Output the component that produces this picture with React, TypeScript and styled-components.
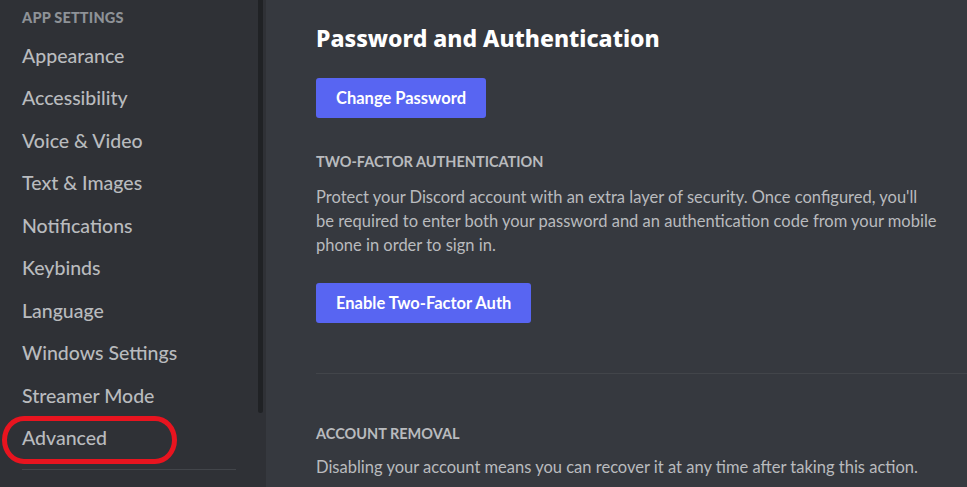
import React from "react";
import styled, { createGlobalStyle } from "styled-components";

const Global = createGlobalStyle`
  html, body { margin: 0; padding: 0; background: #36393f; }
  body { font-family: Lato, "Noto Sans", sans-serif; overflow: hidden; }
  * { box-sizing: border-box; }
`;

const Shell = styled.div`
  display: flex;
  width: 967px;
  height: 487px;
  overflow: hidden;
`;

const Sidebar = styled.aside`
  display: flex;
  width: 266px;
  flex-shrink: 0;
  background: #2f3136;
`;

const Nav = styled.nav`
  position: relative;
  flex: 1;
  padding: 8px 0 0 22px;
  display: flex;
  flex-direction: column;
`;

const NavHeader = styled.div`
  font-size: 14.5px;
  font-weight: 900;
  letter-spacing: 0.2px;
  color: #8e9297;
  line-height: 20px;
  height: 26px;
  text-transform: uppercase;
`;

const NavItem = styled.div`
  height: 42.5px;
  display: flex;
  align-items: center;
  font-size: 19.5px;
  color: #b9bbbe;
  font-weight: 500;
`;

const NavDivider = styled.div`
  margin-top: 10px;
  margin-right: 22px;
  height: 1px;
  background: #42454a;
`;

const Highlight = styled.div`
  position: absolute;
  left: 2px;
  top: 416px;
  width: 175px;
  height: 48px;
  border: 5px solid #e8141f;
  border-radius: 22px / 24px;
  pointer-events: none;
`;

const ScrollTrack = styled.div`
  width: 8px;
  display: flex;
  padding-right: 3px;
`;

const ScrollThumb = styled.div`
  width: 5px;
  height: 413px;
  background: #202225;
  border-radius: 0 0 3px 3px;
`;

const Main = styled.main`
  flex: 1;
  background: #36393f;
  padding: 22px 0 0 50px;
  display: flex;
  flex-direction: column;
`;

const Title = styled.h1`
  margin: 0 0 24px;
  font-size: 23px;
  line-height: 32px;
  font-weight: 800;
  color: #ffffff;
  font-family: "Noto Sans", Lato, sans-serif;
`;

const Button = styled.button<{ $top?: number }>`
  align-self: flex-start;
  margin-top: ${(p) => p.$top ?? 0}px;
  height: 40px;
  padding: 0 20px;
  border: 0;
  border-radius: 3px;
  background: #5865f2;
  color: #ffffff;
  font-family: Lato, sans-serif;
  font-size: 16.5px;
  font-weight: 700;
`;

const SectionLabel = styled.h2<{ $top: number }>`
  margin: ${(p) => p.$top}px 0 0;
  font-size: 14.5px;
  line-height: 20px;
  font-weight: 700;
  color: #b9bbbe;
  text-transform: uppercase;
`;

const Para = styled.p<{ $top?: number }>`
  margin: ${(p) => p.$top ?? 13}px 0 0;
  width: 621px;
  font-size: 16.5px;
  line-height: 24px;
  color: #b9bbbe;
`;

const Divider = styled.div`
  margin: 50px 0 0;
  height: 1px;
  background: #42454a;
`;

const items = [
  "Appearance",
  "Accessibility",
  "Voice & Video",
  "Text & Images",
  "Notifications",
  "Keybinds",
  "Language",
  "Windows Settings",
  "Streamer Mode",
  "Advanced",
];

export default function App() {
  return (
    <>
      <Global />
      <Shell>
        <Sidebar>
          <Nav>
            <NavHeader>App Settings</NavHeader>
            {items.map((it) => (
              <NavItem key={it}>{it}</NavItem>
            ))}
            <NavDivider />
            <Highlight />
          </Nav>
          <ScrollTrack>
            <ScrollThumb />
          </ScrollTrack>
        </Sidebar>
        <Main>
          <Title>Password and Authentication</Title>
          <Button>Change Password</Button>
          <SectionLabel $top={34}>Two-Factor Authentication</SectionLabel>
          <Para>
            Protect your Discord account with an extra layer of security. Once configured, you'll be required to
            enter both your password and an authentication code from your mobile phone in order to sign in.
          </Para>
          <Button $top={26}>Enable Two-Factor Auth</Button>
          <Divider />
          <SectionLabel $top={50}>Account Removal</SectionLabel>
          <Para $top={11}>Disabling your account means you can recover it at any time after taking this action.</Para>
        </Main>
      </Shell>
    </>
  );
}
